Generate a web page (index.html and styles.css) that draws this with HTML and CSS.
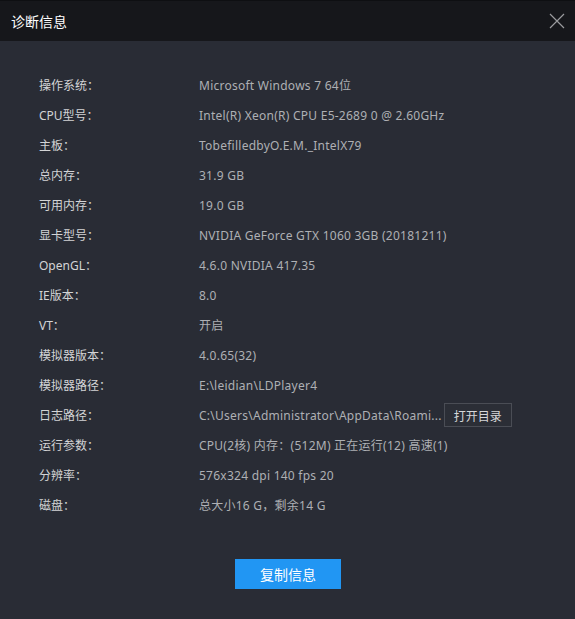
FILE: index.html
```html
<!DOCTYPE html>
<html>
<head>
<meta charset="utf-8">
<link rel="stylesheet" href="styles.css">
</head>
<body>
<div class="dialog">
  <div class="titlebar">
    <span class="title">诊断信息</span>
    <svg class="close" width="16" height="16" viewBox="0 0 16 16"><path d="M1 1L15 15M15 1L1 15" stroke="#9a9b9e" stroke-width="1.2" fill="none"/></svg>
  </div>
  <div class="content">
    <div class="row"><span class="label">操作系统：</span><span class="value">Microsoft Windows 7 64位</span></div>
    <div class="row"><span class="label">CPU型号：</span><span class="value">Intel(R) Xeon(R) CPU E5-2689 0 @ 2.60GHz</span></div>
    <div class="row"><span class="label">主板：</span><span class="value">TobefilledbyO.E.M._IntelX79</span></div>
    <div class="row"><span class="label">总内存：</span><span class="value">31.9 GB</span></div>
    <div class="row"><span class="label">可用内存：</span><span class="value">19.0 GB</span></div>
    <div class="row"><span class="label">显卡型号：</span><span class="value">NVIDIA GeForce GTX 1060 3GB (20181211)</span></div>
    <div class="row"><span class="label">OpenGL：</span><span class="value">4.6.0 NVIDIA 417.35</span></div>
    <div class="row"><span class="label">IE版本：</span><span class="value">8.0</span></div>
    <div class="row"><span class="label">VT：</span><span class="value">开启</span></div>
    <div class="row"><span class="label">模拟器版本：</span><span class="value">4.0.65(32)</span></div>
    <div class="row"><span class="label">模拟器路径：</span><span class="value">E:\leidian\LDPlayer4</span></div>
    <div class="row"><span class="label">日志路径：</span><span class="value">C:\Users\Administrator\AppData\Roami...</span><button class="open">打开目录</button></div>
    <div class="row"><span class="label">运行参数：</span><span class="value">CPU(2核) 内存：(512M) 正在运行(12) 高速(1)</span></div>
    <div class="row"><span class="label">分辨率：</span><span class="value">576x324 dpi 140 fps 20</span></div>
    <div class="row"><span class="label">磁盘：</span><span class="value">总大小16 G，剩余14 G</span></div>
  </div>
  <div class="footer"><button class="copy">复制信息</button></div>
</div>
</body>
</html>
```
FILE: styles.css
```css
html, body { margin: 0; padding: 0; }
body {
  width: 575px; height: 619px; overflow: hidden;
  background: #292c35;
  font-family: "Noto Sans", "Noto Sans CJK SC", sans-serif;
  font-size: 12px;
}
.dialog { display: flex; flex-direction: column; height: 619px; }
.titlebar {
  height: 41px; box-sizing: border-box;
  background: #16171b;
  border-top: 1px solid #0e0f12;
  display: flex; align-items: center; justify-content: space-between;
  padding: 0 10px 0 11px;
}
.title { color: #ffffff; font-size: 14px; font-family: "Noto Sans CJK SC", sans-serif; }
.close { display: block; }
.content { padding: 29px 0 0 39px; }
.row { height: 30px; display: flex; align-items: center; }
.label { width: 160px; color: #d3d4d6; }
.value { color: #aeb0b4; letter-spacing: 0.25px; }
.open {
  margin-left: 2px; height: 24px; width: 68px;
  background: #2b2e36; border: 1px solid #4a4d55; color: #d6d7d9;
  font-family: "Noto Sans CJK SC", sans-serif; font-size: 12px; padding: 0;
}
.footer { display: flex; justify-content: center; padding-top: 39px; padding-left: 1px; }
.copy {
  width: 106px; height: 30px; border: none; padding: 0;
  background: #2196f3; color: #ffffff;
  font-family: "Noto Sans CJK SC", sans-serif; font-size: 14px;
}
```
